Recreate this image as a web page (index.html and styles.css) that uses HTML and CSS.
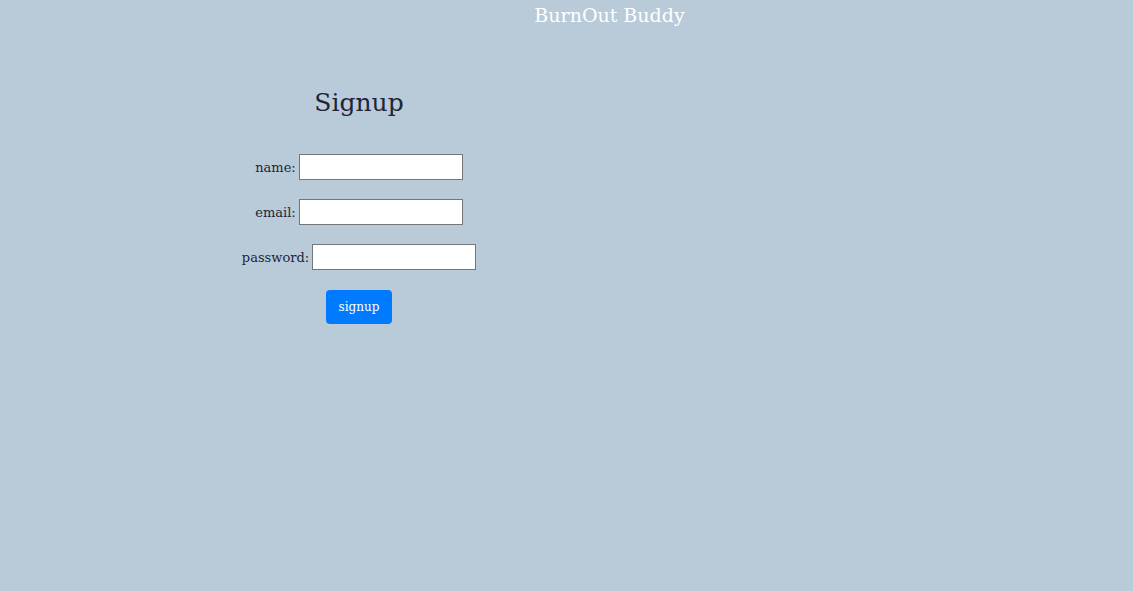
FILE: index.html
```html
<!DOCTYPE html>
<html>
<head>
<meta charset="utf-8">
<link rel="stylesheet" href="styles.css">
</head>
<body>
<header class="top">
  <span class="brand">BurnOut Buddy</span>
</header>
<main class="layout">
  <section class="form-col">
    <h1 class="title">Signup</h1>
    <form class="form">
      <div class="row"><label class="lbl">name:</label><input class="field" type="text"></div>
      <div class="row"><label class="lbl">email:</label><input class="field" type="text"></div>
      <div class="row"><label class="lbl">password:</label><input class="field" type="password"></div>
      <div class="row"><button class="btn" type="button">signup</button></div>
    </form>
  </section>
</main>
</body>
</html>
```
FILE: styles.css
```css
html, body {
  margin: 0;
  padding: 0;
  background: #b9cbd9;
  height: 100%;
}
body {
  font-family: "DejaVu Serif", serif;
  color: #1e2538;
}
.top {
  display: flex;
  justify-content: center;
  padding-left: 86px;
  height: 30px;
  align-items: center;
}
.brand {
  color: #ffffff;
  font-size: 19px;
}
.layout {
  display: flex;
}
.form-col {
  width: 718px;
  display: flex;
  flex-direction: column;
  align-items: center;
  padding-top: 53px;
}
.title {
  margin: 0;
  font-weight: normal;
  font-size: 25px;
  line-height: 40px;
}
.form {
  display: flex;
  flex-direction: column;
  align-items: center;
  margin-top: 31px;
  gap: 19px;
}
.row {
  display: flex;
  align-items: center;
  gap: 3px;
}
.lbl {
  font-size: 13px;
}
.field {
  width: 164px;
  height: 26px;
  box-sizing: border-box;
  border: 1px solid #767676;
  background: #fff;
  margin: 0;
  padding: 2px 4px;
}
.btn {
  margin-top: 1px;
  width: 66px;
  height: 34px;
  border: none;
  border-radius: 4px;
  background: #007bff;
  color: #fff;
  font-family: "DejaVu Serif", serif;
  font-size: 12px;
}
```
